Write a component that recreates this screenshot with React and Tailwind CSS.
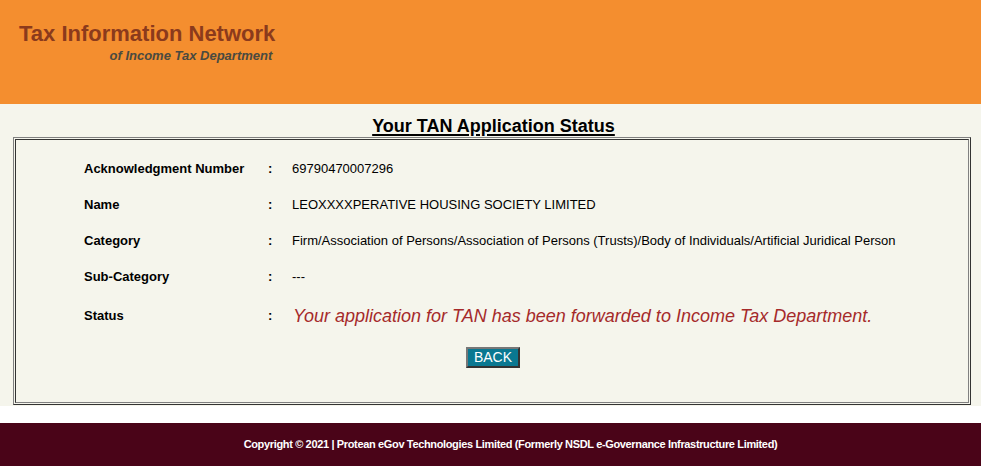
export default function App() {
  const rows = [
    { label: "Acknowledgment Number", value: "69790470007296" },
    { label: "Name", value: "LEOXXXXPERATIVE HOUSING SOCIETY LIMITED" },
    {
      label: "Category",
      value:
        "Firm/Association of Persons/Association of Persons (Trusts)/Body of Individuals/Artificial Juridical Person",
    },
    { label: "Sub-Category", value: "---" },
  ];

  return (
    <div className="w-[981px] min-h-[475px] bg-white font-['Liberation_Sans',Arial,sans-serif] text-black">
      {/* Header band */}
      <header className="h-[104px] bg-[#F48E2F] pl-[19px] pt-[21px]">
        <div className="inline-block">
          <div className="text-[22px] leading-[25px] font-bold text-[#8B3A1C]">
            Tax Information Network
          </div>
          <div className="text-right pr-[3px] pt-[2px] text-[13px] leading-[15px] font-bold italic text-[#4A4A40]">
            of Income Tax Department
          </div>
        </div>
      </header>

      {/* Status panel */}
      <main className="bg-[#F5F5EC] pl-[13px] pr-[10px] pt-[12px] pb-[1px]">
        <h1 className="text-center text-[18px] leading-[21px] font-bold underline underline-offset-[2px] decoration-[1.5px] pl-[3px]">
          Your TAN Application Status
        </h1>
        <div className="border border-t-[#808080] border-l-[#808080] border-b-[#333333] border-r-[#333333] p-[1px]">
          <div className="border border-t-[#333333] border-l-[#333333] border-b-[#808080] border-r-[#808080] pt-[11px] pb-[34px]">
            {rows.map((r) => (
              <div key={r.label} className="flex items-center h-[36px] text-[13px]">
                <div className="w-[252px] pl-[68px] font-bold">{r.label}</div>
                <div className="w-[24px] font-bold">:</div>
                <div>{r.value}</div>
              </div>
            ))}
            <div className="flex items-center h-[42px] text-[13px]">
              <div className="w-[252px] pl-[68px] font-bold">Status</div>
              <div className="w-[25px] font-bold">:</div>
              <div className="text-[18px] italic text-[#A52A2A]">
                Your application for TAN has been forwarded to Income Tax Department.
              </div>
            </div>
            <div className="flex justify-center mt-[10px] pl-[2px]">
              <button className="h-[21px] px-[6px] bg-[#0A7891] text-white text-[14px] leading-[17px] border-2 border-t-[#777777] border-l-[#777777] border-b-[#333333] border-r-[#333333]">
                BACK
              </button>
            </div>
          </div>
        </div>
      </main>

      {/* Footer */}
      <div className="h-[17px] bg-white" />
      <footer className="h-[43px] bg-[#4A0418] flex items-center justify-center pl-[40px]">
        <span className="text-[11px] font-bold tracking-[-0.35px] text-white">
          Copyright © 2021 | Protean eGov Technologies Limited (Formerly NSDL e-Governance Infrastructure Limited)
        </span>
      </footer>
    </div>
  );
}
